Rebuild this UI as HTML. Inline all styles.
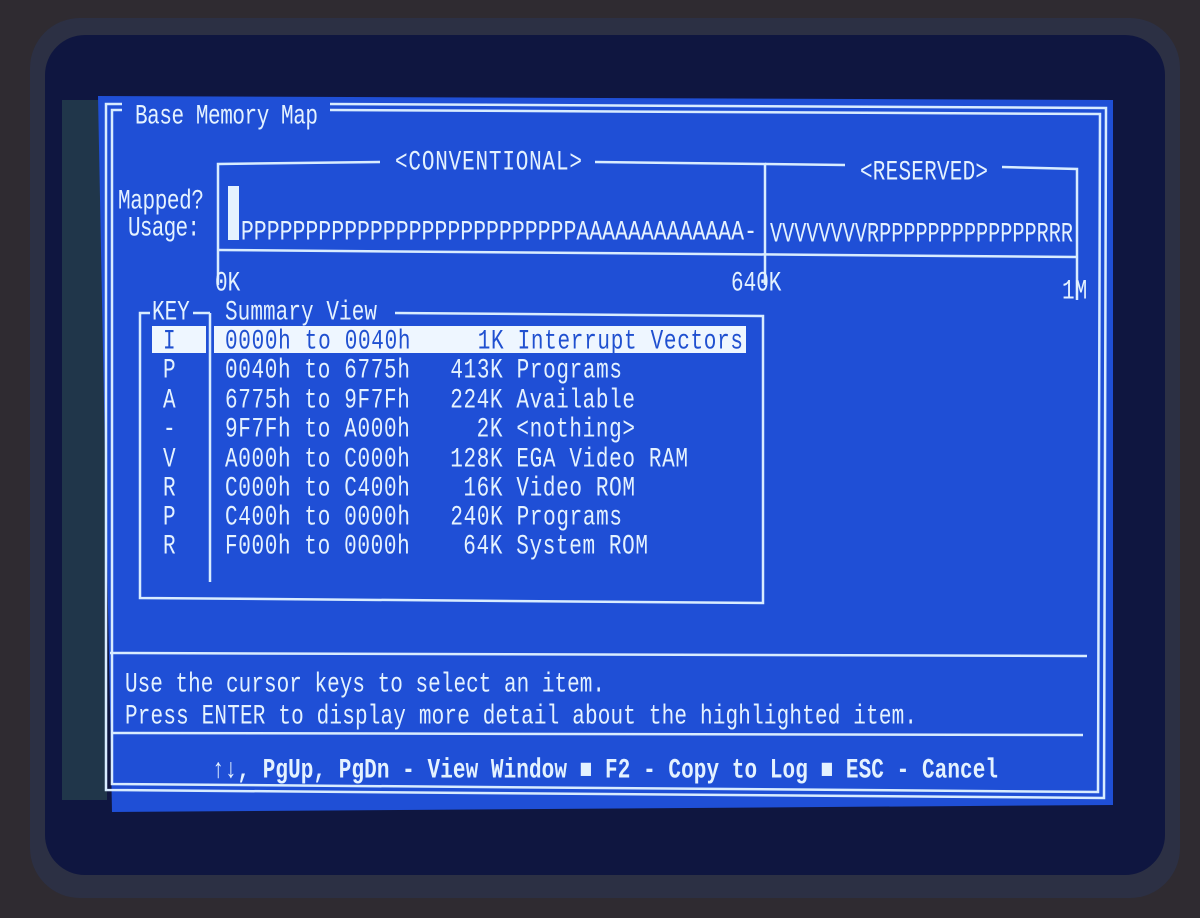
<!DOCTYPE html>
<html><head><meta charset="utf-8"><style>
html,body{margin:0;padding:0;background:#2e2a30;width:1200px;height:918px;overflow:hidden}
svg{display:block}
text{font-family:"Liberation Mono",monospace;fill:#e4f2ff;font-size:21px;font-weight:bold;transform:scaleY(1.3);transform-box:fill-box;transform-origin:center}
.n{font-weight:normal}
</style></head><body>
<svg width="1200" height="918" viewBox="0 0 1200 918" xmlns="http://www.w3.org/2000/svg">
<rect width="1200" height="918" fill="#2f2b31"/>
<rect x="30" y="18" width="1150" height="880" rx="50" fill="#2c3044"/>
<rect x="45" y="35" width="1120" height="840" rx="40" fill="#0f1640"/>
<rect x="62" y="100" width="45" height="700" fill="#243e4c" opacity="0.8"/>
<polygon points="98,96 1113,100 1113,805 112,812" fill="#1f4fd6"/>
<g stroke="#d8ecff" stroke-width="2.5" fill="none">
<path d="M330,104 L1106,108 L1104,798 L106,790 L106,104 L122,104"/>
<path d="M330,110 L1100,114 L1098,792 L112,784 L112,110 L122,110"/>
<path d="M218,285 L218,164 L380,162"/>
<path d="M595,162 L765,164 L765,285"/>
<path d="M765,164 L845,165"/>
<path d="M1002,167 L1077,169 L1077,300"/>
<path d="M218,250 L1077,257"/>
<path d="M193,313 L210,313"/>
<path d="M395,313 L763,316 L763,603 L140,598 L140,313 L150,313"/>
<path d="M210,313 L210,582"/>
<path d="M110,653 L1087,656"/>
<path d="M112,733 L1083,735"/>
</g>
<text x="135" y="122" class="n" textLength="183">Base Memory Map</text>
<text x="395" y="168" class="n" textLength="187">&lt;CONVENTIONAL&gt;</text>
<text x="860" y="178" class="n" textLength="128">&lt;RESERVED&gt;</text>
<text x="118" y="207" class="n" textLength="86">Mapped?</text>
<text x="128" y="234" class="n" textLength="72">Usage:</text>
<rect x="228" y="186" width="11" height="54" fill="#e4f2ff"/>
<text x="228" y="238" class="n" textLength="529" lengthAdjust="spacingAndGlyphs">IPPPPPPPPPPPPPPPPPPPPPPPPPPAAAAAAAAAAAAA-</text>
<text x="770" y="240" class="n" textLength="303" lengthAdjust="spacingAndGlyphs">VVVVVVVVRPPPPPPPPPPPPPRRR</text>
<text x="215" y="289" class="n">0K</text>
<text x="731" y="289" class="n">640K</text>
<text x="1062" y="297" class="n">1M</text>
<text x="152" y="318" class="n">KEY</text>
<text x="225" y="318" class="n" textLength="152">Summary View</text>
<rect x="152" y="326" width="54" height="27" fill="#eef6ff"/>
<rect x="214" y="326" width="532" height="27" fill="#eef6ff"/>
<text x="163" y="347" class="n" style="fill:#2050d0">I</text>
<text x="225" y="347" class="n" style="fill:#2050d0" textLength="518" xml:space="preserve">0000h to 0040h     1K Interrupt Vectors</text>
<text x="163" y="376" class="n">P</text><text x="225" y="376" class="n" textLength="397" xml:space="preserve">0040h to 6775h   413K Programs</text>
<text x="163" y="406" class="n">A</text><text x="225" y="406" class="n" textLength="410" xml:space="preserve">6775h to 9F7Fh   224K Available</text>
<text x="163" y="435" class="n">-</text><text x="225" y="435" class="n" textLength="410" xml:space="preserve">9F7Fh to A000h     2K &lt;nothing&gt;</text>
<text x="163" y="465" class="n">V</text><text x="225" y="465" class="n" textLength="463" xml:space="preserve">A000h to C000h   128K EGA Video RAM</text>
<text x="163" y="494" class="n">R</text><text x="225" y="494" class="n" textLength="410" xml:space="preserve">C000h to C400h    16K Video ROM</text>
<text x="163" y="523" class="n">P</text><text x="225" y="523" class="n" textLength="397" xml:space="preserve">C400h to 0000h   240K Programs</text>
<text x="163" y="552" class="n">R</text><text x="225" y="552" class="n" textLength="423" xml:space="preserve">F000h to 0000h    64K System ROM</text>
<text x="125" y="690" class="n" textLength="480">Use the cursor keys to select an item.</text>
<text x="125" y="722" class="n" textLength="792">Press ENTER to display more detail about the highlighted item.</text>
<text x="212" y="776" textLength="786" xml:space="preserve">↑↓, PgUp, PgDn - View Window ■ F2 - Copy to Log ■ ESC - Cancel</text>
</svg>
</body></html>
